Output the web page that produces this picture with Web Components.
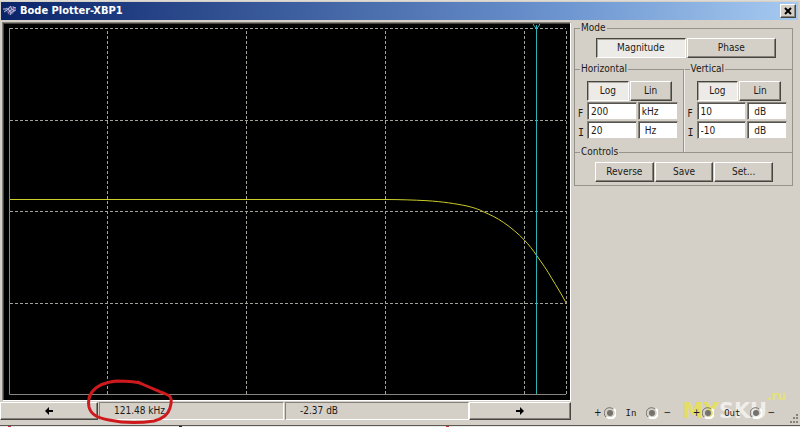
<!DOCTYPE html>
<html lang="en">
<head>
<meta charset="utf-8">
<title>Bode Plotter-XBP1</title>
<style>
  html, body { margin: 0; height: 100%; }
  body {
    --face: #d4d0c8; --hi: #fff; --shade: #85827b; --dark: #47453f;
    font: 10px/12px "DejaVu Sans Condensed", "DejaVu Sans", sans-serif;
    color: #1c1a17; background: #d4d0c8;
  }
</style>
</head>
<body>
<bode-window></bode-window>
<script>
const define = (name, html, setup) => {
  const template = document.createElement('template');
  template.innerHTML = html;
  customElements.define(name, class extends HTMLElement {
    constructor() {
      super();
      this.attachShadow({ mode: 'open' }).append(template.content.cloneNode(true));
    }
    connectedCallback() { if (setup) setup(this, this.shadowRoot); }
  });
};

define('push-button', `
<style>
  :host { display: block; min-width: 0; }
  button {
    display: flex; align-items: center; justify-content: center;
    box-sizing: border-box; width: 100%; height: 100%; padding: 0; margin: 0;
    font: inherit; color: inherit; background: var(--face); border-radius: 0;
    border: 1px solid; border-color: var(--hi) var(--dark) var(--dark) var(--hi);
    box-shadow: inset -1px -1px var(--shade);
  }
  :host([pressed]) button {
    background: #edebe7; border-color: var(--dark) var(--hi) var(--hi) var(--dark);
    box-shadow: inset 1px 1px #aaa79f;
  }
</style>
<button type="button"><slot></slot></button>`, (el, root) => {
  const b = root.querySelector('button');
  if (el.hasAttribute('pressed')) b.setAttribute('aria-pressed', 'true');
  if (el.hasAttribute('label')) b.setAttribute('aria-label', el.getAttribute('label'));
});

define('title-bar', `
<style>
  :host {
    display: flex; align-items: center; gap: 3px; height: 18px; padding: 0 2px;
    background: linear-gradient(90deg, #0a246a, #6c94cf 70%, #a6caf0);
    color: #fff;
  }
  svg { display: block; }
  h1 { flex: 1; margin: 0; font: bold 11px/18px "DejaVu Sans Condensed", "DejaVu Sans", sans-serif; }
  push-button { width: 16px; height: 14px; color: #000; }
</style>
<svg width="14" height="14" viewBox="0 0 14 14" fill="none" aria-hidden="true">
  <path d="M1 6l3-2 3-2 3 0 3 2-1 3-2 3-3 1-2-1-1-2z" fill="#4c4f8c"/>
  <path d="M0 5h3M1 8l3-2 3-3M5 9l3-3 3-1M7 11l2-3 4-2M3 4l3 2 2 3M7 2l2 3 2 2M10 3l3 1" stroke="#b9bfe2"/>
  <path d="M2 7h1M6 4h1M8 7h1M5 9h1M11 5h1" stroke="#b4688c"/>
</svg>
<h1><slot></slot></h1>
<push-button label="Close"><svg width="8" height="8" viewBox="0 0 8 8"><path d="M1 1l6 6M7 1l-6 6" stroke="#000" stroke-width="2"/></svg></push-button>`);

define('bode-plot', `
<style>
  :host {
    display: block; flex: 1; min-height: 0; overflow: hidden; background: #000;
    border: 1px solid; border-color: var(--shade) var(--hi) var(--hi) var(--shade);
    box-shadow: inset 1px 1px #47453f;
  }
  svg { display: block; width: 100%; height: 100%; }
  path { fill: none; vector-effect: non-scaling-stroke; }
  .grid { stroke: #a3a39b; stroke-dasharray: 3 2; }
  .axis { stroke: #85857f; }
  .curve { stroke: #cccc2c; }
  .cursor { stroke: #2ab2b8; }
</style>
<svg viewBox="3 23 567 377" preserveAspectRatio="none" role="img" aria-label="Magnitude response">
  <path class="grid" d="M10 28.500H566M10 120.500H566M10 211.500H566M10 303.500H566M107.500 31V394M246.500 31V394M385.500 31V394M524.500 31V394M566.500 31V394"/>
  <path class="axis" d="M9.500 28V394.500H566"/>
  <path class="curve" d="M10 199.500H385C400 199.500 413 200 427 200.700C443 201.700 455 203.600 467 206C476 208.200 480 210 483.300 211.700C491 215 497 218 503.300 222.300C511 227.500 518 233.500 524.300 240C529 245 533 250 536.300 255C542 263 547 270 551.700 278.300C557 287 562 295 566.300 303.300"/>
  <path class="cursor" d="M536.500 25V394M533.500 24v1l3 4l3-4v-1"/>
</svg>`);

define('readout-bar', `
<style>
  :host { display: grid; grid-template-columns: 98fr 186fr 185fr 102fr; height: 18px; }
  output {
    position: relative; display: flex; align-items: center; box-sizing: border-box;
    margin-left: 1px; padding-left: 14px;
    border: 1px solid; border-color: var(--shade) var(--hi) var(--hi) var(--shade);
  }
  svg { display: block; }
  .mark { position: absolute; left: -13px; top: -25px; overflow: visible; pointer-events: none; }
</style>
<push-button label="Move cursor left"><svg width="8" height="8" viewBox="0 0 8 8"><path d="M0 4l4-4v3h4v2H4v3z"/></svg></push-button>
<output>121.48 kHz
  <svg class="mark" width="90" height="48" viewBox="0 0 90 48" fill="none" stroke="#cf1a1d" stroke-width="3" stroke-linecap="round" stroke-linejoin="round" aria-hidden="true">
    <path d="M55 6C49 3 40 3 30 3C20 4 10 7 5 14C2 18 1 24 2 29C4 37 11 40 22 42C36 45 54 45 67 43C75 41 81 37 83 30C85 24 85 19 81 17C72 13 61 9 51 4"/>
  </svg>
</output>
<output>-2.37 dB</output>
<push-button label="Move cursor right"><svg width="8" height="8" viewBox="0 0 8 8"><path d="M8 4L4 0v3H0v2h4v3z"/></svg></push-button>`);

define('group-box', `
<style>
  :host { display: block; min-width: 0; }
  fieldset {
    box-sizing: border-box; min-width: 0; height: 100%; margin: 0; padding: 0;
    border: 1px solid #96938b; border-bottom-width: 0;
  }
  :host([joined]) fieldset { border-left-color: #f0eeea; }
  :host([last]) fieldset { border-bottom-width: 1px; }
  legend { margin-left: 5px; padding: 0 1px; height: 12px; }
</style>
<fieldset><legend></legend><slot></slot></fieldset>`, (el, root) => {
  root.querySelector('legend').textContent = el.getAttribute('label');
});

define('range-fields', `
<style>
  :host { display: block; padding: 6px 5px 13px 3px; }
  .scale { display: grid; grid-template-columns: 1fr 1fr; gap: 1px; height: 20px; margin: 0 6px 0 9px; }
  .row { display: grid; grid-template-columns: 8px 50fr 40fr; column-gap: 1px; height: 18px; margin-top: 1px; }
  label { align-self: end; }
  label[for="i"] { font-family: "DejaVu Sans Mono", monospace; }
  input {
    box-sizing: border-box; width: 100%; min-width: 0; height: 100%; margin: 0; padding: 0 3px;
    font: inherit; color: inherit; background: #fff; border-radius: 0;
    border: 1px solid; border-color: var(--shade) var(--face) var(--face) var(--shade);
    box-shadow: inset 1px 1px #55534d;
  }
  .inset { padding-left: 6px; }
</style>
<div class="scale"><push-button pressed>Log</push-button><push-button>Lin</push-button></div>
<div class="row"><label for="f">F</label><input id="f"><input id="fu" aria-label="Final value unit"></div>
<div class="row"><label for="i">I</label><input id="i"><input id="iu" aria-label="Initial value unit"></div>`, (el, root) => {
  for (const id of ['f', 'fu', 'i', 'iu']) {
    const input = root.getElementById(id);
    input.value = el.getAttribute(id);
    if (id.endsWith('u') && input.value !== 'kHz') input.className = 'inset';
  }
});

define('port-pair', `
<style>
  :host { position: relative; z-index: 1; display: flex; align-items: center; gap: 2px; }
  span { margin: 0 8px; font: 9px/12px "DejaVu Sans Mono", monospace; }
  i { margin-left: 3px; font-style: normal; }
  svg { display: block; }
  path { fill: none; }
</style>
+<svg width="12" height="12" viewBox="0 0 12 12"><circle cx="6" cy="6" r="3" fill="#74726d"/><path d="M2 10A5 5 0 0 1 9 2" stroke="#77746e"/><path d="M10 2A5 5 0 0 1 3 10" stroke="#fff" stroke-width="2"/></svg>
<span><slot></slot></span>
<svg width="12" height="12" viewBox="0 0 12 12"><circle cx="6" cy="6" r="3" fill="#74726d"/><path d="M2 10A5 5 0 0 1 9 2" stroke="#77746e"/><path d="M10 2A5 5 0 0 1 3 10" stroke="#fff" stroke-width="2"/></svg><i>−</i>`);

define('site-mark', `
<style>
  :host {
    position: absolute; right: 7px; bottom: -3px; display: flex; pointer-events: none;
    font: bold 21px/24px "DejaVu Sans", sans-serif; color: #f0eeea;
  }
  b { color: #e4df62; }
  sup { align-self: flex-start; margin-top: -10px; font-size: 12px; line-height: 14px; color: #e4e07e; }
</style>
<b>MY</b><span>SKU</span><sup>.ru</sup>`);

define('control-panel', `
<style>
  :host { display: flex; flex-direction: column; min-width: 0; padding: 0 7px 0 3px; }
  .mode { display: grid; grid-template-columns: 1fr 1fr; gap: 1px; height: 20px; padding: 4px 16px 11px 21px; }
  .ranges { display: grid; grid-template-columns: 1fr 1fr; }
  .ranges, .controls { margin-top: -6px; }
  .actions { display: grid; grid-template-columns: repeat(3, 1fr); gap: 1px; height: 20px; padding: 4px 19px 3px 20px; }
  .ports {
    position: relative; display: flex; align-items: center; justify-content: space-between;
    margin-top: auto; padding: 0 18px 0 20px; height: 14px;
  }
  .grip { position: absolute; right: -6px; bottom: -4px; }
</style>
<group-box label="Mode"><div class="mode"><push-button pressed>Magnitude</push-button><push-button>Phase</push-button></div></group-box>
<div class="ranges">
  <group-box label="Horizontal"><range-fields f="200" fu="kHz" i="20" iu="Hz"></range-fields></group-box>
  <group-box label="Vertical" joined><range-fields f="10" fu="dB" i="-10" iu="dB"></range-fields></group-box>
</div>
<group-box class="controls" label="Controls" last><div class="actions"><push-button>Reverse</push-button><push-button>Save</push-button><push-button>Set...</push-button></div></group-box>
<div class="ports">
  <port-pair>In</port-pair><port-pair>Out</port-pair>
  <site-mark></site-mark>
  <svg class="grip" width="10" height="10" viewBox="0 0 10 10" aria-hidden="true"><path d="M7 0h2v2h-2zM4 3h2v2h-2zM7 3h2v2h-2zM1 7h2v2h-2zM4 7h2v2h-2zM7 7h2v2h-2z" fill="#85827b"/></svg>
</div>`);

define('bode-window', `
<style>
  :host { display: flex; flex-direction: column; box-sizing: border-box; min-height: 100vh; background: var(--face); border-top: 1px solid #dedbd5; padding-top: 1px; }
  title-bar { margin: 0 2px 0 1px; }
  main { flex: 1; display: grid; grid-template-columns: 571fr 229fr; padding: 2px 0 5px; }
  .left { display: flex; flex-direction: column; min-width: 0; gap: 1px; }
  bode-plot { margin: 0 0 0 2px; }
  footer {
    height: 1px; border-top: 1px solid #5b5954;
    background: linear-gradient(#c33, #c33) 1% 0 / 3px 1px no-repeat,
      linear-gradient(#222, #222) 22.5% 0 / 3px 1px no-repeat,
      linear-gradient(#c33, #c33) 56% 0 / 3px 1px no-repeat, #eceae6;
  }
</style>
<title-bar>Bode Plotter-XBP1</title-bar>
<main>
  <div class="left"><bode-plot></bode-plot><readout-bar></readout-bar></div>
  <control-panel></control-panel>
</main>
<footer></footer>`);
</script>
</body>
</html>
